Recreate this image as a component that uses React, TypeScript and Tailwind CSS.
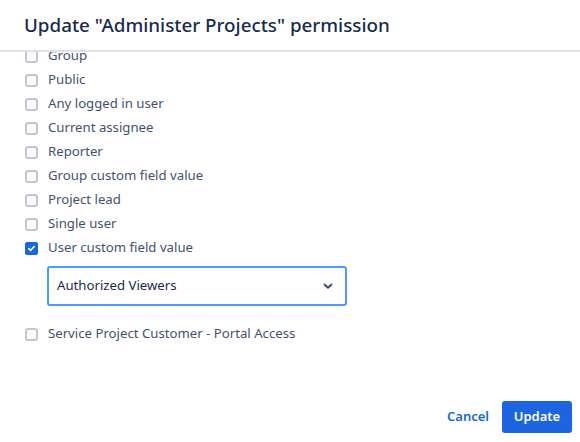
import React, { useState } from 'react';

const options = [
  'Group',
  'Public',
  'Any logged in user',
  'Current assignee',
  'Reporter',
  'Group custom field value',
  'Project lead',
  'Single user',
  'User custom field value',
];

function Checkbox({ checked }: { checked: boolean }) {
  return checked ? (
    <span className="w-[13px] h-[13px] rounded-[2px] bg-[#1868db] flex items-center justify-center shrink-0">
      <svg width="9" height="9" viewBox="0 0 10 10" fill="none">
        <path d="M2 5.2l2 2 4-4.4" stroke="white" strokeWidth="1.8" strokeLinecap="round" strokeLinejoin="round" />
      </svg>
    </span>
  ) : (
    <span className="w-[13px] h-[13px] rounded-[3px] border-2 border-[#c1c7d0] bg-[#fafbfc] shrink-0" />
  );
}

export default function App() {
  const [checked] = useState('User custom field value');

  return (
    <div
      className="w-[580px] h-[442px] bg-white flex flex-col text-[#172b4d]"
      style={{ fontFamily: '"Noto Sans", "Open Sans", sans-serif' }}
    >
      {/* Header */}
      <div className="h-[52px] shrink-0 flex items-center px-[24px] border-b-2 border-[#dfe1e6]">
        <h1 className="text-[18.8px] font-medium text-[#172b4d]">
          Update "Administer Projects" permission
        </h1>
      </div>

      {/* Body, scrolled a little so the first row is half hidden */}
      <div className="h-[330px] overflow-hidden px-[25px]">
        <div className="mt-[-8px] flex flex-col">
          {options.map((o) => (
            <label key={o} className="h-[24px] flex items-center gap-[10px] text-[13.2px] text-[#42526e]">
              <Checkbox checked={o === checked} />
              <span>{o}</span>
            </label>
          ))}
          <div className="pl-[22px] pt-[6px] pb-[16px]">
            <div className="w-[300px] h-[40px] rounded-[3px] border-2 border-[#4c9aff] flex items-center justify-between pl-[8px] pr-[12px] text-[13.2px] text-[#172b4d]">
              <span>Authorized Viewers</span>
              <svg width="10" height="7" viewBox="0 0 10 7" fill="none">
                <path d="M1.5 1.5l3.5 3.2 3.5-3.2" stroke="#42526e" strokeWidth="2" strokeLinecap="round" strokeLinejoin="round" />
              </svg>
            </div>
          </div>
          <label className="h-[24px] flex items-center gap-[10px] text-[13.2px] text-[#42526e]">
            <Checkbox checked={false} />
            <span>Service Project Customer - Portal Access</span>
          </label>
        </div>
      </div>

      {/* Footer */}
      <div className="flex-1 flex items-start justify-end gap-[13px] pr-[8px] pt-[19px]">
        <button className="h-[32px] text-[13px] font-semibold text-[#1868db]">Cancel</button>
        <button className="h-[32px] w-[70px] rounded-[3px] bg-[#1d64e0] text-[13px] font-semibold text-white">
          Update
        </button>
      </div>
    </div>
  );
}
